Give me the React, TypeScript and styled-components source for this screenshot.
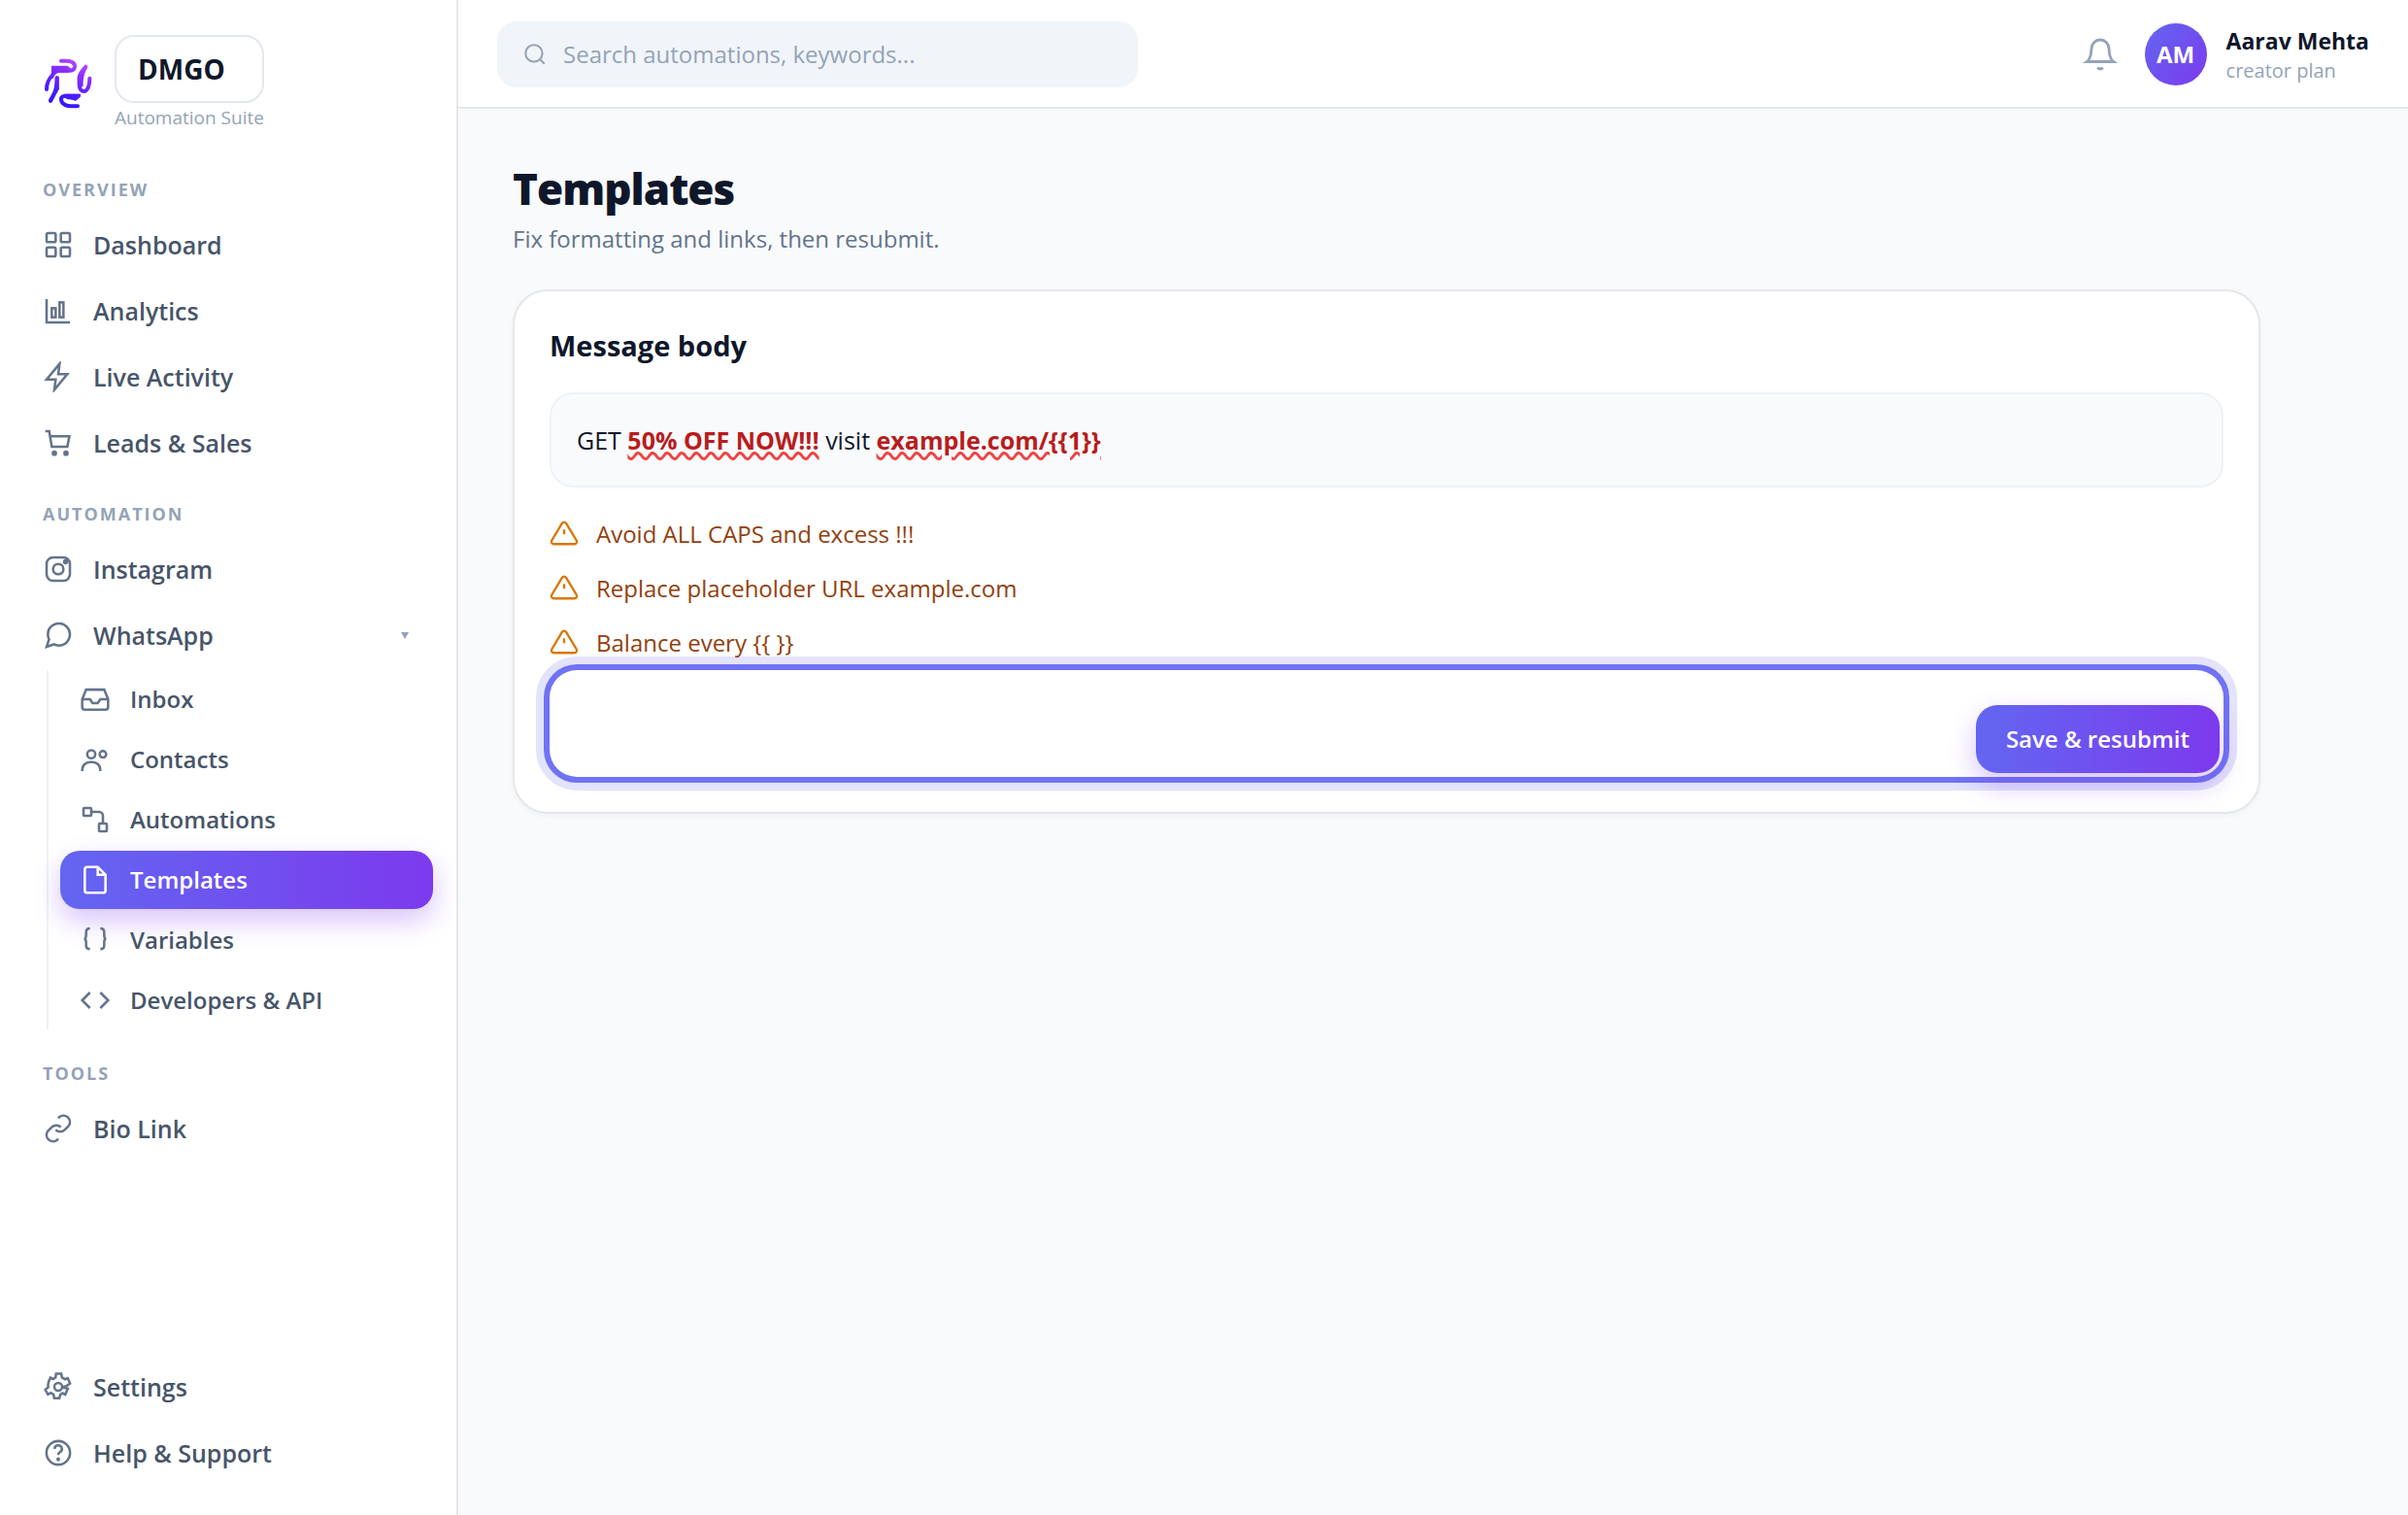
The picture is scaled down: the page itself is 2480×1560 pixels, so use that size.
import React from "react";
import styled, { createGlobalStyle, css } from "styled-components";

const GlobalStyle = createGlobalStyle`
  *, *::before, *::after { box-sizing: border-box; }
  body {
    margin: 0;
    background: #f8fafc;
    color: #0f172a;
    font-family: "Segoe UI", "Open Sans", "Noto Sans", sans-serif;
    font-size: 24px;
    line-height: 36px;
  }
  h1, h2, p, ul { margin: 0; padding: 0; }
  ul { list-style: none; }
  a { color: inherit; text-decoration: none; }
  button, input { font: inherit; border: 0; background: none; padding: 0; cursor: pointer; }
`;

const gradient = "linear-gradient(90deg, #6366f1, #7c3aed)";
const liftShadow = "0 12px 28px rgba(124, 58, 237, 0.3)";

const Shell = styled.div`
  display: grid;
  grid-template-columns: 472px minmax(0, 1fr);
  min-height: 100vh;
`;

const Sidebar = styled.aside`
  display: flex;
  flex-direction: column;
  padding: 36px 24px 32px;
  background: #fff;
  border-right: 2px solid #e5e7eb;
`;

const Brand = styled.div`
  display: flex;
  align-items: center;
  gap: 22px;
  padding: 0 20px;
  margin-bottom: 18px;
`;

const BrandText = styled.div`
  display: flex;
  flex-direction: column;
`;

const BrandName = styled.div`
  padding: 13px 22px;
  border: 2px solid #e2e8f0;
  border-radius: 20px;
  font-size: 28px;
  font-weight: 700;
  line-height: 40px;
`;

const BrandTag = styled.div`
  font-size: 19px;
  line-height: 30px;
  color: #94a3b8;
`;

const SectionTitle = styled.h2`
  margin: 31px 20px 15px;
  font-size: 18px;
  font-weight: 700;
  line-height: 20px;
  letter-spacing: 2px;
  text-transform: uppercase;
  color: #94a3b8;
`;

const NavList = styled.ul`
  display: flex;
  flex-direction: column;
  gap: 4px;
`;

const NavLink = styled.a<{ $compact?: boolean; $active?: boolean }>`
  display: flex;
  align-items: center;
  gap: 20px;
  height: ${(p) => (p.$compact ? "60px" : "64px")};
  padding: 0 20px;
  border-radius: 20px;
  font-size: ${(p) => (p.$compact ? "24px" : "25px")};
  font-weight: 600;
  color: #475569;
  svg { flex: none; color: #64748b; }
  ${(p) =>
    p.$active &&
    css`
      background: ${gradient};
      box-shadow: ${liftShadow};
      color: #fff;
      svg { color: #fff; }
    `}
`;

const NavLabel = styled.span`
  flex: 1;
`;

const SubList = styled.ul`
  display: flex;
  flex-direction: column;
  gap: 2px;
  margin: 4px 0 35px 24px;
  padding-left: 12px;
  border-left: 2px solid #eef2f7;
`;

const SidebarFooter = styled.div`
  margin-top: auto;
`;

const Page = styled.div`
  display: flex;
  flex-direction: column;
`;

const TopBar = styled.header`
  display: flex;
  align-items: center;
  justify-content: space-between;
  padding: 22px 40px 20px;
  background: #fff;
  border-bottom: 2px solid #e5e7eb;
`;

const SearchBox = styled.label`
  display: flex;
  align-items: center;
  gap: 16px;
  width: 660px;
  height: 68px;
  padding: 0 26px;
  border-radius: 20px;
  background: #f1f5f9;
  color: #94a3b8;
`;

const SearchInput = styled.input`
  flex: 1;
  min-width: 0;
  outline: none;
  color: #0f172a;
  cursor: text;
  &::placeholder { color: #94a3b8; opacity: 1; }
`;

const Account = styled.div`
  display: flex;
  align-items: center;
`;

const BellButton = styled.button`
  display: flex;
  margin-right: 28px;
  color: #94a3b8;
`;

const Avatar = styled.div`
  display: grid;
  place-items: center;
  width: 64px;
  height: 64px;
  margin-right: 20px;
  border-radius: 50%;
  background: linear-gradient(135deg, #6366f1, #7c3aed);
  color: #fff;
  font-weight: 700;
`;

const UserText = styled.div`
  padding-top: 2px;
`;

const UserName = styled.div`
  font-size: 23px;
  font-weight: 700;
  line-height: 32px;
`;

const UserPlan = styled.div`
  font-size: 20px;
  line-height: 30px;
  color: #94a3b8;
`;

const Main = styled.main`
  padding: 56px;
`;

const PageTitle = styled.h1`
  font-size: 44px;
  font-weight: 800;
  line-height: 52px;
  letter-spacing: -1px;
`;

const PageIntro = styled.p`
  margin: 8px 0 34px;
  color: #64748b;
`;

const Card = styled.section`
  max-width: 1800px;
  padding: 36px;
  border: 2px solid #e5e7eb;
  border-radius: 36px;
  background: #fff;
  box-shadow: 0 2px 6px rgba(15, 23, 42, 0.04);
`;

const CardTitle = styled.h2`
  font-size: 29px;
  font-weight: 700;
  line-height: 40px;
`;

const MessageBody = styled.p`
  margin: 28px 0;
  padding: 24px 26px;
  border: 2px solid #eef2f7;
  border-radius: 24px;
  background: #f8fafc;
  font-size: 25px;
  line-height: 46px;
`;

const Flagged = styled.strong`
  font-weight: 700;
  color: #b91c1c;
  text-decoration: underline wavy #ef4444 3px;
`;

const WarningList = styled.ul`
  display: flex;
  flex-direction: column;
  gap: 16px;
  margin-bottom: 8px;
`;

const Warning = styled.li`
  display: flex;
  gap: 18px;
  line-height: 40px;
  color: #92400e;
  svg { flex: none; margin-top: 4px; color: #d97706; }
`;

const Actions = styled.div`
  display: flex;
  justify-content: flex-end;
  padding: 36px 4px 4px;
  border-radius: 28px;
  box-shadow: 0 0 0 6px #7073f3, 0 0 0 14px rgba(99, 102, 241, 0.18);
`;

const PrimaryButton = styled.button`
  height: 70px;
  padding: 0 31px;
  border-radius: 22px;
  background: ${gradient};
  box-shadow: ${liftShadow};
  color: #fff;
  font-weight: 600;
`;

type IconProps = { size?: number; children: React.ReactNode };

function Icon({ size = 32, children }: IconProps) {
  return (
    <svg
      width={size}
      height={size}
      viewBox="0 0 24 24"
      fill="none"
      stroke="currentColor"
      strokeWidth={1.9}
      aria-hidden="true"
    >
      {children}
    </svg>
  );
}

const icons = {
  dashboard: (
    <Icon>
      <rect x="3" y="3" width="7" height="7" rx="1.2" />
      <rect x="14" y="3" width="7" height="7" rx="1.2" />
      <rect x="3" y="14" width="7" height="7" rx="1.2" />
      <rect x="14" y="14" width="7" height="7" rx="1.2" />
    </Icon>
  ),
  analytics: (
    <Icon>
      <path d="M3 3v18h18" />
      <rect x="7" y="10" width="3" height="7" />
      <rect x="13" y="5.5" width="3" height="11.5" />
    </Icon>
  ),
  bolt: (
    <Icon>
      <path d="M13 2 3 14h7l-1 8 10-12h-7l1-8z" />
    </Icon>
  ),
  cart: (
    <Icon>
      <path d="M2 3h3l2 12h12l1.6-8H5.7" />
      <circle cx="9" cy="20" r="1.2" fill="currentColor" />
      <circle cx="18" cy="20" r="1.2" fill="currentColor" />
    </Icon>
  ),
  instagram: (
    <Icon>
      <rect x="3" y="3" width="18" height="18" rx="5" />
      <circle cx="12" cy="12" r="4" />
      <circle cx="17.6" cy="6.4" r="1.1" fill="currentColor" />
    </Icon>
  ),
  chat: (
    <Icon>
      <path d="M21 11.5a8.38 8.38 0 0 1-.9 3.8 8.5 8.5 0 0 1-7.6 4.7 8.38 8.38 0 0 1-3.8-.9L3 21l1.9-5.7a8.38 8.38 0 0 1-.9-3.8 8.5 8.5 0 0 1 4.7-7.6 8.38 8.38 0 0 1 3.8-.9h.5a8.48 8.48 0 0 1 8 8v.5z" />
    </Icon>
  ),
  inbox: (
    <Icon>
      <path d="M22 12h-6l-2 3h-4l-2-3H2" />
      <path d="M2 12 5 4.6h14L22 12v6a2 2 0 0 1-2 2H4a2 2 0 0 1-2-2z" />
    </Icon>
  ),
  contacts: (
    <Icon>
      <circle cx="9" cy="8" r="3.1" />
      <circle cx="18" cy="8" r="2.5" />
      <path d="M2 21v-1a6 6 0 0 1 6-6h2a6 6 0 0 1 6 6v1" />
    </Icon>
  ),
  flow: (
    <Icon>
      <rect x="3" y="3" width="6" height="6" rx="0.6" />
      <rect x="15" y="15" width="6" height="6" rx="0.6" />
      <path d="M9 6h6a3 3 0 0 1 3 3v6" />
    </Icon>
  ),
  file: (
    <Icon>
      <path d="M14 2H6a2 2 0 0 0-2 2v16a2 2 0 0 0 2 2h12a2 2 0 0 0 2-2V8z" />
      <path d="M14 2v6h6" />
    </Icon>
  ),
  braces: (
    <Icon>
      <path d="M8 3C6 3 5 4 5 6v2.5c0 1.6-.5 2.5-1.6 2.5 1.1 0 1.600.9 1.600 2.500V16c0 2 1 3 3 3" />
      <path d="M16 3c2 0 3 1 3 3v2.5c0 1.6.5 2.5 1.6 2.5-1.1 0-1.600.9-1.600 2.500V16c0 2-1 3-3 3" />
    </Icon>
  ),
  code: (
    <Icon>
      <path d="m8 6-6 6 6 6M16 6l6 6-6 6" />
    </Icon>
  ),
  link: (
    <Icon>
      <path d="M10 13a5 5 0 0 0 7 0l3-3a5 5 0 0 0-7-7l-1 1" />
      <path d="M14 11a5 5 0 0 0-7 0l-3 3a5 5 0 0 0 7 7l1-1" />
    </Icon>
  ),
  settings: (
    <Icon>
      <circle cx="12" cy="12" r="3" />
      <path d="M10.3 1.9h4l.6 2.9 2.4 1.4 2-.9 1.8 4.1-2.9 2.1-3.6.8 4.8 1.1-2 4.6-2.2-1.1-1.7 1.2-.6 2.7H8.9l-.6-2.9-2.1-1.2-2.2 1.2-2-3.6 2.2-1.9c-.2-1.3-.1-2.5.2-3.8l1.6-3.7 2 1.1 1.9-1.1z" />
    </Icon>
  ),
  help: (
    <Icon>
      <circle cx="12" cy="12" r="9.1" />
      <path d="M9.2 9a2.8 2.8 0 1 1 4.2 2.4c-.9.5-1.4 1.1-1.4 2.3" />
      <circle cx="12" cy="17" r="0.6" fill="currentColor" />
    </Icon>
  ),
};

function Logo() {
  return (
    <svg width="52" height="52" viewBox="42 90 156 156" fill="none" aria-hidden="true">
      <defs>
        <linearGradient id="logo-fill" gradientUnits="userSpaceOnUse" x1="146" y1="96" x2="90" y2="226">
          <stop offset="0" stopColor="#b44bff" />
          <stop offset="0.3" stopColor="#8a2dff" />
          <stop offset="0.75" stopColor="#4a1dff" />
          <stop offset="1" stopColor="#3418ff" />
        </linearGradient>
      </defs>
      <g stroke="url(#logo-fill)" strokeWidth="12" strokeLinecap="round" strokeLinejoin="round">
        <path d="M99 98h17c16 0 26 8 25 18-1 8-8 12-18 12H96" />
        <path d="M72 142c-12 12-18 26-18 44" />
        <path d="M86 150v34l-20 38" />
        <path d="M150 238h-22c-20 0-30-12-29-24 1-6 8-8 18-8h36" />
        <path d="M175 116c-10 12-20 22-20 34v22c0 14 8 22 17 20 10-5 15-20 15-40" />
      </g>
      <g fill="url(#logo-fill)">
        <path d="M69 113h50l11 10-8 11H94c-10 1-17 8-20 18l-12 2c6-10 8-20 7-41z" />
        <path d="M80 148l12-2v40l-24 38-8-6c12-18 20-30 20-70z" />
        <path d="M108 200h52c-2 10-8 17-18 22-8-6-20-2-30-8z" />
        <path d="M149 150l24-38 7 8c-10 16-14 34-13 58l-14-2z" />
      </g>
    </svg>
  );
}

type Entry = { label: string; icon: React.ReactNode; active?: boolean };

const overview: Entry[] = [
  { label: "Dashboard", icon: icons.dashboard },
  { label: "Analytics", icon: icons.analytics },
  { label: "Live Activity", icon: icons.bolt },
  { label: "Leads & Sales", icon: icons.cart },
];

const whatsapp: Entry[] = [
  { label: "Inbox", icon: icons.inbox },
  { label: "Contacts", icon: icons.contacts },
  { label: "Automations", icon: icons.flow },
  { label: "Templates", icon: icons.file, active: true },
  { label: "Variables", icon: icons.braces },
  { label: "Developers & API", icon: icons.code },
];

const support: Entry[] = [
  { label: "Settings", icon: icons.settings },
  { label: "Help & Support", icon: icons.help },
];

const warnings = [
  "Avoid ALL CAPS and excess !!!",
  "Replace placeholder URL example.com",
  "Balance every {{ }}",
];

function NavItem({ entry, compact, children }: { entry: Entry; compact?: boolean; children?: React.ReactNode }) {
  return (
    <li>
      <NavLink href="#" $compact={compact} $active={entry.active} aria-current={entry.active ? "page" : undefined}>
        {entry.icon}
        <NavLabel>{entry.label}</NavLabel>
        {children}
      </NavLink>
    </li>
  );
}

const Caret = styled.span`
  width: 0;
  height: 0;
  margin-right: 5px;
  border: 4px solid transparent;
  border-top: 7px solid #94a3b8;
  border-bottom: 0;
`;

export default function App() {
  return (
    <>
      <GlobalStyle />
      <Shell>
        <Sidebar>
          <Brand>
            <Logo />
            <BrandText>
              <BrandName>DMGO</BrandName>
              <BrandTag>Automation Suite</BrandTag>
            </BrandText>
          </Brand>
          <nav>
            <SectionTitle>Overview</SectionTitle>
            <NavList>
              {overview.map((e) => (
                <NavItem key={e.label} entry={e} />
              ))}
            </NavList>
            <SectionTitle>Automation</SectionTitle>
            <NavList>
              <NavItem entry={{ label: "Instagram", icon: icons.instagram }} />
              <NavItem entry={{ label: "WhatsApp", icon: icons.chat }}>
                <Caret />
              </NavItem>
            </NavList>
            <SubList>
              {whatsapp.map((e) => (
                <NavItem key={e.label} entry={e} compact />
              ))}
            </SubList>
            <SectionTitle>Tools</SectionTitle>
            <NavList>
              <NavItem entry={{ label: "Bio Link", icon: icons.link }} />
            </NavList>
          </nav>
          <SidebarFooter>
            <NavList>
              {support.map((e) => (
                <NavItem key={e.label} entry={e} />
              ))}
            </NavList>
          </SidebarFooter>
        </Sidebar>
        <Page>
          <TopBar>
            <SearchBox>
              <Icon size={26}>
                <circle cx="11" cy="11" r="8" />
                <path d="m21 21-4.3-4.3" />
              </Icon>
              <SearchInput type="search" aria-label="Search" placeholder="Search automations, keywords..." />
            </SearchBox>
            <Account>
              <BellButton type="button" aria-label="Notifications">
                <Icon size={36}>
                  <path d="M18 8a6 6 0 0 0-12 0c0 7-3 9-3 9h18s-3-2-3-9" />
                  <path d="M13.73 21a2 2 0 0 1-3.46 0" />
                </Icon>
              </BellButton>
              <Avatar>AM</Avatar>
              <UserText>
                <UserName>Aarav Mehta</UserName>
                <UserPlan>creator plan</UserPlan>
              </UserText>
            </Account>
          </TopBar>
          <Main>
            <PageTitle>Templates</PageTitle>
            <PageIntro>Fix formatting and links, then resubmit.</PageIntro>
            <Card>
              <CardTitle>Message body</CardTitle>
              <MessageBody>
                GET <Flagged>50% OFF NOW!!!</Flagged> visit <Flagged>{"example.com/{{1}}"}</Flagged>
              </MessageBody>
              <WarningList>
                {warnings.map((text) => (
                  <Warning key={text}>
                    <Icon size={30}>
                      <path d="M10.29 3.86 1.82 18a2 2 0 0 0 1.71 3h16.94a2 2 0 0 0 1.71-3L13.71 3.86a2 2 0 0 0-3.42 0z" />
                      <path d="M12 9v4" />
                    </Icon>
                    {text}
                  </Warning>
                ))}
              </WarningList>
              <Actions>
                <PrimaryButton type="button">Save &amp; resubmit</PrimaryButton>
              </Actions>
            </Card>
          </Main>
        </Page>
      </Shell>
    </>
  );
}
